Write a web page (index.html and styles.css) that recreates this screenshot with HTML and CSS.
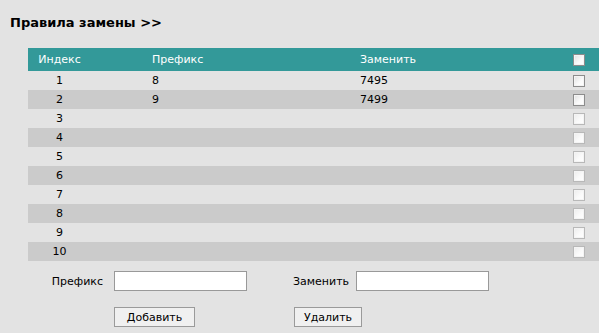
FILE: index.html
```html
<!DOCTYPE html>
<html lang="ru">
<head>
    <meta charset="UTF-8">
    <title>Правила замены</title>
    <link rel="stylesheet" href="styles.css">
</head>
<body>

    <h2 class="title">Правила замены &gt;&gt;</h2>

    <table class="rules">
        <thead>
            <tr>
                <th class="col-idx">Индекс</th>
                <th class="col-pref">Префикс</th>
                <th class="col-repl">Заменить</th>
                <th class="col-chk"><input type="checkbox" class="chk"></th>
            </tr>
        </thead>
        <tbody id="rulesBody">
            <!-- строки добавляются скриптом -->
        </tbody>
    </table>

    <div class="form">
        <label class="lbl lbl-pref" for="prefix">Префикс</label>
        <input type="text" id="prefix" class="field">
        <label class="lbl" for="replace">Заменить</label>
        <input type="text" id="replace" class="field">
        <button class="btn btn-add">Добавить</button>
        <button class="btn btn-del">Удалить</button>
    </div>

    <script>
        const rules = [
            { prefix: "8", replace: "7495" },
            { prefix: "9", replace: "7499" }
        ];

        const body = document.getElementById("rulesBody");
        for (let i = 0; i < 10; i++) {
            const rule = rules[i];
            const row = `<tr>
                <td class="col-idx">${i + 1}</td>
                <td class="col-pref">${rule ? rule.prefix : ""}</td>
                <td class="col-repl">${rule ? rule.replace : ""}</td>
                <td class="col-chk"><input type="checkbox" class="chk" ${rule ? "" : "disabled"}></td>
            </tr>`;
            body.innerHTML += row;
        }
    </script>

</body>
</html>
```

FILE: styles.css
```css
body {
    font-family: "DejaVu Sans", Verdana, sans-serif;
    font-size: 11px;
    background-color: #e3e3e3;
    color: #000;
    margin: 0;
    padding: 0 0 0 10px;
}
.title {
    font-size: 13px;
    line-height: 16px;
    font-weight: bold;
    margin: 0;
    padding-top: 15px;
    height: 48px;
    box-sizing: border-box;
}
.rules {
    width: 571px;
    margin-left: 18px;
    border-collapse: collapse;
    table-layout: fixed;
}
.rules th {
    background-color: #339999;
    color: #fff;
    font-weight: normal;
    height: 23px;
    padding: 0;
    text-align: left;
}
.rules td {
    height: 19px;
    padding: 0;
}
.rules tbody tr:nth-child(even) {
    background-color: #cbcbcb;
}
.rules .col-idx {
    width: 63px;
    text-align: center;
}
.rules .col-pref {
    width: 208px;
    padding-left: 61px;
}
.rules .col-repl {
    width: auto;
}
.rules .col-chk {
    width: 40px;
    text-align: right;
    padding-right: 14px;
}
.chk {
    appearance: none;
    -webkit-appearance: none;
    width: 12px;
    height: 12px;
    margin: 0;
    display: inline-block;
    vertical-align: middle;
    border: 1px solid #8c8c8c;
    background: linear-gradient(135deg, #e0e0e0 0%, #fbfbfb 60%, #ffffff 100%);
    box-shadow: inset 0 0 0 1px #f4f4f4;
}
.chk:disabled {
    border-color: #b8b8b8;
    background: linear-gradient(135deg, #ececec 0%, #fbfbfb 60%, #ffffff 100%);
}
.form {
    display: grid;
    grid-template-columns: 86px 179px 63px 133px;
    grid-template-rows: 20px 20px;
    row-gap: 16px;
    margin: 10px 0 0 18px;
    align-items: center;
}
.lbl {
    color: #000;
}
.lbl-pref {
    justify-self: end;
    padding-right: 11px;
}
.field {
    width: 133px;
    height: 20px;
    box-sizing: border-box;
    border: 1px solid #999;
    background: #fff;
    margin: 0;
    padding: 0 3px;
    font-family: inherit;
    font-size: 11px;
}
.btn {
    height: 20px;
    box-sizing: border-box;
    border: 1px solid #9a9a9a;
    background: #f0f0f0;
    font-family: inherit;
    font-size: 11px;
    color: #000;
    padding: 0;
    justify-self: start;
}
.btn-add {
    grid-column: 2;
    width: 81px;
}
.btn-del {
    grid-column: 3 / span 2;
    width: 68px;
    margin-left: 1px;
}
```
